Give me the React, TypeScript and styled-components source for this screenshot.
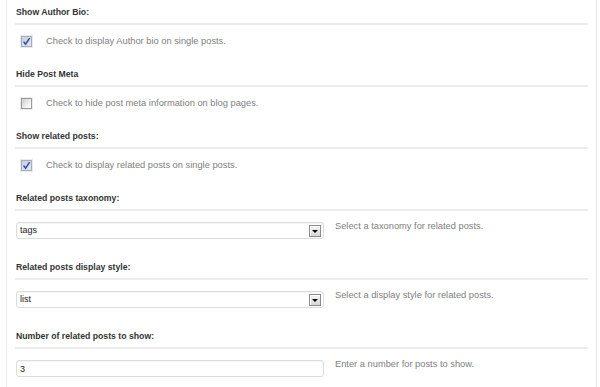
import React from "react";
import styled, { createGlobalStyle } from "styled-components";

const Global = createGlobalStyle`
  html, body { margin: 0; padding: 0; background: #fff; }
  body { font-family: "Liberation Sans", Arial, sans-serif; }
`;

const Panel = styled.div`
  margin-left: 6px;
  width: 573px;
  min-height: 387px;
  box-sizing: content-box;
  border-left: 1px solid #ececec;
  border-right: 1px solid #e6e6e6;
  padding: 5px 8px 0 8px;
`;

const Section = styled.section<{ $field?: boolean }>`
  margin-bottom: ${(p) => (p.$field ? "21px" : "19px")};
`;

const Heading = styled.h3`
  margin: 0;
  font-size: 8.7px;
  font-weight: bold;
  line-height: 13px;
  color: #333;
  padding: 1px 0 4px 1px;
  border-bottom: 2px solid #ececec;
`;

const OptionRow = styled.label`
  display: flex;
  align-items: center;
  height: 13px;
  margin-top: 10px;
  padding-left: 6px;
`;

const Box = styled.span<{ $checked: boolean }>`
  width: 9px;
  height: 9px;
  flex: none;
  display: flex;
  align-items: center;
  justify-content: center;
  border: 1px solid ${(p) => (p.$checked ? "#a9adb8" : "#9a9a9a")};
  background: ${(p) =>
    p.$checked
      ? "linear-gradient(135deg, #c9cddc 0%, #e4e7f1 100%)"
      : "linear-gradient(135deg, #cfcfcf 0%, #f4f4f4 70%, #ffffff 100%)"};
  box-shadow: 0 0 0 1px ${(p) => (p.$checked ? "#e9eaee" : "#ededed")};
`;

const Desc = styled.span`
  font-size: 9.3px;
  line-height: 13px;
  color: #808080;
`;

const OptionDesc = styled(Desc)`
  margin-left: 14px;
`;

const FieldRow = styled.div`
  display: flex;
  align-items: flex-start;
  margin-top: 11px;
`;

const SelectBox = styled.div`
  width: 302px;
  height: 15px;
  margin-left: 1px;
  border: 1px solid #dcdcdc;
  border-radius: 3px;
  background: #fff;
  box-shadow: inset 0 1px 1px rgba(0, 0, 0, 0.04);
  display: flex;
  align-items: center;
  justify-content: space-between;
  padding: 0 1px 0 3px;
  box-sizing: content-box;
`;

const Value = styled.span`
  font-size: 9px;
  color: #222;
  line-height: 13px;
`;

const ArrowButton = styled.span`
  width: 10px;
  height: 10px;
  border: 1px solid #8a8a8a;
  background: linear-gradient(#f6f6f6, #d6d6d6);
  box-shadow: inset 1px 1px 0 #fff;
  display: flex;
  align-items: center;
  justify-content: center;
  margin-right: 1px;
  &::after {
    content: "";
    width: 0;
    height: 0;
    border-left: 3px solid transparent;
    border-right: 3px solid transparent;
    border-top: 3px solid #000;
    margin-top: 1px;
  }
`;

const TextInput = styled.input`
  width: 303px;
  height: 15px;
  margin: 0 0 0 1px;
  border: 1px solid #dcdcdc;
  border-radius: 3px;
  padding: 0 0 0 3px;
  box-sizing: content-box;
  font-family: "Liberation Sans", Arial, sans-serif;
  font-size: 9px;
  color: #222;
  box-shadow: inset 0 1px 1px rgba(0, 0, 0, 0.04);
  outline: none;
`;

const FieldDesc = styled(Desc)`
  margin-left: 11px;
  margin-top: -2px;
`;

const Check = () => (
  <svg width="9" height="9" viewBox="0 0 9 9">
    <path d="M1.6 4.6 L3.6 7.2 L7.6 1.2" fill="none" stroke="#2d4cab" strokeWidth="1.5" />
  </svg>
);

type CheckOpt = { title: string; desc: string; checked: boolean };

const checks: CheckOpt[] = [
  { title: "Show Author Bio:", desc: "Check to display Author bio on single posts.", checked: true },
  { title: "Hide Post Meta", desc: "Check to hide post meta information on blog pages.", checked: false },
  { title: "Show related posts:", desc: "Check to display related posts on single posts.", checked: true },
];

export default function App() {
  return (
    <>
      <Global />
      <Panel>
        {checks.map((c) => (
          <Section key={c.title}>
            <Heading>{c.title}</Heading>
            <OptionRow>
              <Box $checked={c.checked}>{c.checked && <Check />}</Box>
              <OptionDesc>{c.desc}</OptionDesc>
            </OptionRow>
          </Section>
        ))}
        <Section $field>
          <Heading>Related posts taxonomy:</Heading>
          <FieldRow>
            <SelectBox>
              <Value>tags</Value>
              <ArrowButton />
            </SelectBox>
            <FieldDesc>Select a taxonomy for related posts.</FieldDesc>
          </FieldRow>
        </Section>
        <Section $field>
          <Heading>Related posts display style:</Heading>
          <FieldRow>
            <SelectBox>
              <Value>list</Value>
              <ArrowButton />
            </SelectBox>
            <FieldDesc>Select a display style for related posts.</FieldDesc>
          </FieldRow>
        </Section>
        <Section $field>
          <Heading>Number of related posts to show:</Heading>
          <FieldRow>
            <TextInput value="3" readOnly />
            <FieldDesc>Enter a number for posts to show.</FieldDesc>
          </FieldRow>
        </Section>
      </Panel>
    </>
  );
}
